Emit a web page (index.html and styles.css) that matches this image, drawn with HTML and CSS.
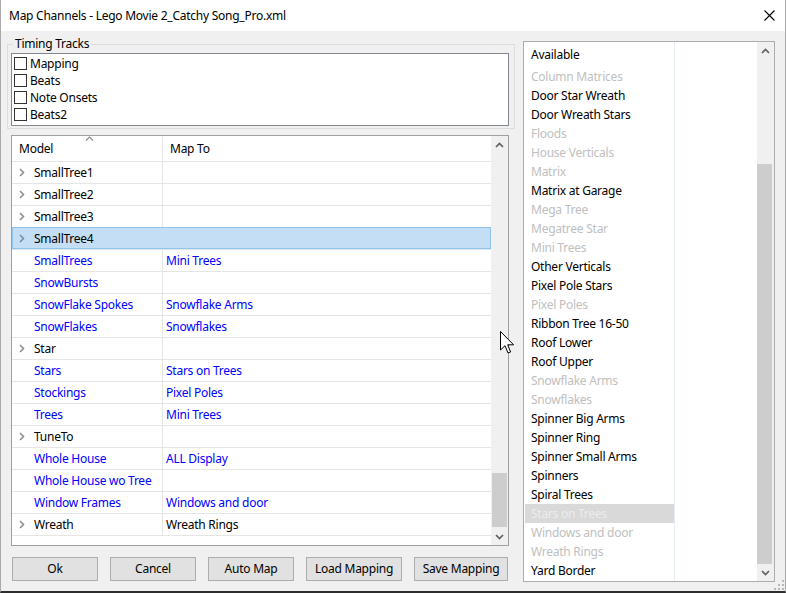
FILE: index.html
```html
<!DOCTYPE html>
<html>
<head>
<meta charset="utf-8">
<link rel="stylesheet" href="styles.css">
</head>
<body>
<div class="window">
  <div class="titlebar">
    <span class="title">Map Channels - Lego Movie 2_Catchy Song_Pro.xml</span>
    <svg class="close" width="11" height="11" viewBox="0 0 11 11"><path d="M0.5 0.5 L10.5 10.5 M10.5 0.5 L0.5 10.5" stroke="#000" stroke-width="1.1" fill="none"/></svg>
  </div>
  <div class="body">
    <div class="left">
      <fieldset class="group">
        <legend>Timing Tracks</legend>
        <div class="listbox">
          <div class="check-row"><span class="box"></span>Mapping</div>
          <div class="check-row"><span class="box"></span>Beats</div>
          <div class="check-row"><span class="box"></span>Note Onsets</div>
          <div class="check-row"><span class="box"></span>Beats2</div>
        </div>
      </fieldset>
      <div class="tree">
        <div class="tree-main">
          <div class="thead">
            <div class="th c1">Model<svg class="sort" width="9" height="5" viewBox="0 0 9 5"><path d="M1 4.5 L4.5 1 L8 4.5" stroke="#8a8a8a" stroke-width="1.1" fill="none"/></svg></div>
            <div class="th c2">Map To</div>
          </div>
          <div class="tr"><div class="td c1"><svg class="exp" width="6" height="9" viewBox="0 0 6 9"><path d="M1 1 L4.5 4.5 L1 8" stroke="#8c8c8c" stroke-width="1.5" fill="none"/></svg>SmallTree1</div><div class="td c2"></div></div>
          <div class="tr"><div class="td c1"><svg class="exp" width="6" height="9" viewBox="0 0 6 9"><path d="M1 1 L4.5 4.5 L1 8" stroke="#8c8c8c" stroke-width="1.5" fill="none"/></svg>SmallTree2</div><div class="td c2"></div></div>
          <div class="tr"><div class="td c1"><svg class="exp" width="6" height="9" viewBox="0 0 6 9"><path d="M1 1 L4.5 4.5 L1 8" stroke="#8c8c8c" stroke-width="1.5" fill="none"/></svg>SmallTree3</div><div class="td c2"></div></div>
          <div class="tr sel"><div class="td c1"><svg class="exp" width="6" height="9" viewBox="0 0 6 9"><path d="M1 1 L4.5 4.5 L1 8" stroke="#7c8a96" stroke-width="1.5" fill="none"/></svg>SmallTree4</div><div class="td c2"></div></div>
          <div class="tr blue"><div class="td c1">SmallTrees</div><div class="td c2">Mini Trees</div></div>
          <div class="tr blue"><div class="td c1">SnowBursts</div><div class="td c2"></div></div>
          <div class="tr blue"><div class="td c1">SnowFlake Spokes</div><div class="td c2">Snowflake Arms</div></div>
          <div class="tr blue"><div class="td c1">SnowFlakes</div><div class="td c2">Snowflakes</div></div>
          <div class="tr"><div class="td c1"><svg class="exp" width="6" height="9" viewBox="0 0 6 9"><path d="M1 1 L4.5 4.5 L1 8" stroke="#8c8c8c" stroke-width="1.5" fill="none"/></svg>Star</div><div class="td c2"></div></div>
          <div class="tr blue"><div class="td c1">Stars</div><div class="td c2">Stars on Trees</div></div>
          <div class="tr blue"><div class="td c1">Stockings</div><div class="td c2">Pixel Poles</div></div>
          <div class="tr blue"><div class="td c1">Trees</div><div class="td c2">Mini Trees</div></div>
          <div class="tr"><div class="td c1"><svg class="exp" width="6" height="9" viewBox="0 0 6 9"><path d="M1 1 L4.5 4.5 L1 8" stroke="#8c8c8c" stroke-width="1.5" fill="none"/></svg>TuneTo</div><div class="td c2"></div></div>
          <div class="tr blue"><div class="td c1">Whole House</div><div class="td c2">ALL Display</div></div>
          <div class="tr blue"><div class="td c1">Whole House wo Tree</div><div class="td c2"></div></div>
          <div class="tr blue"><div class="td c1">Window Frames</div><div class="td c2">Windows and door</div></div>
          <div class="tr last"><div class="td c1"><svg class="exp" width="6" height="9" viewBox="0 0 6 9"><path d="M1 1 L4.5 4.5 L1 8" stroke="#8c8c8c" stroke-width="1.5" fill="none"/></svg>Wreath</div><div class="td c2">Wreath Rings</div></div>
        </div>
        <div class="vscroll">
          <div class="sbtn"><svg width="9" height="6" viewBox="0 0 9 6"><path d="M1 5 L4.5 1.5 L8 5" stroke="#606060" stroke-width="1.7" fill="none"/></svg></div>
          <div class="track"><div class="thumb tree-thumb"></div></div>
          <div class="sbtn"><svg width="9" height="6" viewBox="0 0 9 6"><path d="M1 1 L4.5 4.5 L8 1" stroke="#606060" stroke-width="1.7" fill="none"/></svg></div>
        </div>
      </div>
      <div class="buttons">
        <button class="btn w86">Ok</button>
        <button class="btn w86">Cancel</button>
        <button class="btn w86">Auto Map</button>
        <button class="btn w96">Load Mapping</button>
        <button class="btn w94">Save Mapping</button>
      </div>
    </div>
    <div class="avail">
      <div class="avail-main">
        <div class="acol">
          <div class="ahead">Available</div>
          <div class="aitem dis">Column Matrices</div>
          <div class="aitem">Door Star Wreath</div>
          <div class="aitem">Door Wreath Stars</div>
          <div class="aitem dis">Floods</div>
          <div class="aitem dis">House Verticals</div>
          <div class="aitem dis">Matrix</div>
          <div class="aitem">Matrix at Garage</div>
          <div class="aitem dis">Mega Tree</div>
          <div class="aitem dis">Megatree Star</div>
          <div class="aitem dis">Mini Trees</div>
          <div class="aitem">Other Verticals</div>
          <div class="aitem">Pixel Pole Stars</div>
          <div class="aitem dis">Pixel Poles</div>
          <div class="aitem">Ribbon Tree 16-50</div>
          <div class="aitem">Roof Lower</div>
          <div class="aitem">Roof Upper</div>
          <div class="aitem dis">Snowflake Arms</div>
          <div class="aitem dis">Snowflakes</div>
          <div class="aitem">Spinner Big Arms</div>
          <div class="aitem">Spinner Ring</div>
          <div class="aitem">Spinner Small Arms</div>
          <div class="aitem">Spinners</div>
          <div class="aitem">Spiral Trees</div>
          <div class="aitem dis asel">Stars on Trees</div>
          <div class="aitem dis">Windows and door</div>
          <div class="aitem dis">Wreath Rings</div>
          <div class="aitem">Yard Border</div>
        </div>
      </div>
      <div class="vscroll">
        <div class="sbtn"><svg width="9" height="6" viewBox="0 0 9 6"><path d="M1 5 L4.5 1.5 L8 5" stroke="#606060" stroke-width="1.7" fill="none"/></svg></div>
        <div class="track"><div class="thumb avail-thumb"></div></div>
        <div class="sbtn"><svg width="9" height="6" viewBox="0 0 9 6"><path d="M1 1 L4.5 4.5 L8 1" stroke="#606060" stroke-width="1.7" fill="none"/></svg></div>
      </div>
    </div>
  </div>
  <svg class="grip" width="12" height="12" viewBox="0 0 12 12">
    <rect x="9" y="1" width="2" height="2" fill="#b8b8b8"/>
    <rect x="5" y="5" width="2" height="2" fill="#b8b8b8"/>
    <rect x="9" y="5" width="2" height="2" fill="#b8b8b8"/>
    <rect x="1" y="9" width="2" height="2" fill="#b8b8b8"/>
    <rect x="5" y="9" width="2" height="2" fill="#b8b8b8"/>
    <rect x="9" y="9" width="2" height="2" fill="#b8b8b8"/>
  </svg>
  <svg class="cursor" width="15" height="24" viewBox="0 0 15 24"><path d="M0.5 0.5 L0.5 19 L5 14.7 L8 22 L10.6 21 L7.7 13.8 L13.6 13.8 Z" fill="#fff" stroke="#000" stroke-width="1" stroke-linejoin="miter"/></svg>
</div>
</body>
</html>
```
FILE: styles.css
```css
* { box-sizing: border-box; }
html, body { margin: 0; padding: 0; background: #2d2d2d; }
body {
  font-family: "Noto Sans", "Open Sans", sans-serif;
  font-size: 12px;
  letter-spacing: -0.25px;
  color: #000;
}
.window {
  position: relative;
  width: 786px;
  height: 593px;
  background: #f0f0f0;
  border-left: 1px solid #a9a9a9;
  border-right: 1px solid #a9a9a9;
  border-bottom: 2px solid #2d2d2d;
  display: flex;
  flex-direction: column;
}
.titlebar {
  height: 31px;
  flex: none;
  background: #fff;
  display: flex;
  align-items: center;
  justify-content: space-between;
  padding: 0 10px 0 8px;
}
.title { line-height: 16px; }
.close { display: block; }
.body {
  flex: 1;
  display: flex;
  gap: 8px;
  padding: 5px 10px 0 6px;
}
.left {
  width: 508px;
  flex: none;
  display: flex;
  flex-direction: column;
}
.group {
  margin: 0;
  padding: 1px 5px 2px 3px;
  border: 1px solid #dcdcdc;
  min-width: 0;
}
.group legend {
  padding: 0 2px;
  margin-left: 2px;
  line-height: 16px;
}
.listbox {
  background: #fff;
  border: 1px solid #828790;
  padding: 1px 0 2px;
}
.check-row {
  height: 17px;
  display: flex;
  align-items: center;
  padding-left: 2px;
  line-height: 17px;
}
.box {
  width: 13px;
  height: 13px;
  border: 1px solid #333;
  background: #fff;
  margin-right: 3px;
  flex: none;
}
.tree {
  margin: 6px 0 0 4px;
  width: 498px;
  height: 411px;
  border: 1px solid #a0a0a0;
  background: #fff;
  display: flex;
}
.tree-main {
  width: 479px;
  flex: none;
}
.thead {
  height: 25px;
  display: grid;
  grid-template-columns: 151px 1fr;
}
.th {
  position: relative;
  display: flex;
  align-items: center;
  padding-left: 7px;
}
.th.c1 { border-right: 1px solid #e5e5e5; }
.sort {
  position: absolute;
  left: 73px;
  top: 0px;
}
.tr {
  height: 22px;
  border-top: 1px solid #e5e5e5;
  display: grid;
  grid-template-columns: 151px 1fr;
}
.tr.last { height: 23px; border-bottom: 1px solid #e5e5e5; }
.td {
  display: flex;
  align-items: center;
  white-space: nowrap;
  overflow: hidden;
}
.td.c1 {
  border-right: 1px solid #e5e5e5;
  padding-left: 22px;
  position: relative;
}
.td.c2 { padding-left: 3px; }
.exp {
  position: absolute;
  left: 7px;
  top: 6px;
}
.tr.blue { color: #0000ff; }
.tr.sel {
  background: #c4dff5;
  border-top-color: #8ec5ef;
  box-shadow: inset 1px 0 #8ec5ef, inset -1px 0 #8ec5ef, inset 0 -1px #8ec5ef;
}
.tr.sel .td.c1 { border-right-color: transparent; }
.vscroll {
  width: 17px;
  flex: none;
  background: #f0f0f0;
  display: flex;
  flex-direction: column;
}
.sbtn {
  height: 17px;
  flex: none;
  display: flex;
  align-items: center;
  justify-content: center;
}
.sbtn svg { display: block; }
.track { flex: 1; }
.thumb {
  background: #cdcdcd;
  margin: 0 1px;
}
.tree-thumb { margin-top: 320px; height: 54px; }
.avail-thumb { margin-top: 105px; height: 400px; margin-right: 2px; margin-left: 0; }
.buttons {
  margin: 11px 0 0 5px;
  display: flex;
  gap: 12px;
}
.btn {
  height: 24px;
  border: 1px solid #adadad;
  background: #e1e1e1;
  font-family: inherit;
  font-size: 12px;
  letter-spacing: -0.25px;
  color: #000;
  padding: 0;
  line-height: 20px;
}
.w86 { width: 86px; }
.w96 { width: 96px; }
.w94 { width: 94px; }
.avail {
  margin-top: 5px;
  width: 252px;
  height: 541px;
  flex: none;
  border: 1px solid #adadad;
  background: #fff;
  display: flex;
}
.avail-main {
  width: 233px;
  flex: none;
}
.acol {
  width: 151px;
  height: 100%;
  border-right: 1px solid #e6edf7;
}
.ahead {
  height: 25px;
  line-height: 25px;
  padding-left: 7px;
}
.aitem {
  height: 19px;
  line-height: 19px;
  padding-left: 6px;
  margin-left: 1px;
  white-space: nowrap;
}
.aitem.dis { color: #c0c0c0; }
.aitem.asel { background: #d9d9d9; color: #ececec; }
.grip {
  position: absolute;
  left: 772px;
  top: 579px;
}
.cursor {
  position: absolute;
  left: 499px;
  top: 331px;
}
```
